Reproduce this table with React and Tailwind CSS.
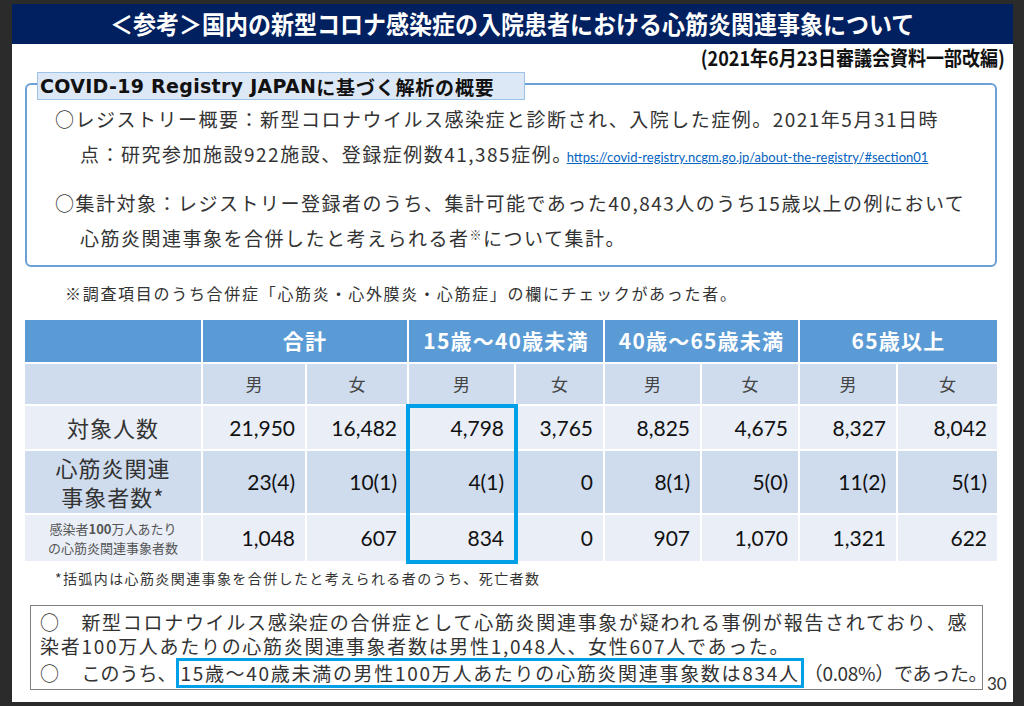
import React from 'react'

const rows = [
  {
    label: <span className='text-[22px] tracking-[1px]'>対象人数</span>,
    vals: ['21,950', '16,482', '4,798', '3,765', '8,825', '4,675', '8,327', '8,042'],
    h: 'h-[43px]',
    bg: 'bg-[#e9eef7]',
  },
  {
    label: (
      <span className='text-[22px] tracking-[1px] leading-[29px] text-center'>
        心筋炎関連<br />事象者数*
      </span>
    ),
    vals: ['23(4)', '10(1)', '4(1)', '0', '8(1)', '5(0)', '11(2)', '5(1)'],
    h: 'h-[62px]',
    bg: 'bg-[#cfdcee]',
  },
  {
    label: (
      <span className='text-[13px] leading-[19px] text-center text-[#555]'>
        感染者<b>100</b>万人あたり<br />の心筋炎関連事象者数
      </span>
    ),
    vals: ['1,048', '607', '834', '0', '907', '1,070', '1,321', '622'],
    h: 'h-[46px]',
    bg: 'bg-[#e9eef7]',
  },
]

const groups = ['合計', '15歳～40歳未満', '40歳～65歳未満', '65歳以上']

function App() {
  return (
    <div className="w-[1024px] h-[706px] bg-[#2b2b2b] pt-[4px] pl-[12px] pr-[11px] font-['Noto_Sans_CJK_JP',sans-serif] text-[#333]">
      <div className='bg-white h-[698px] flex flex-col'>

        {/* title */}
        <div className='h-[40px] bg-[#002060] flex items-center justify-center overflow-hidden'>
          <span className='inline-block text-white text-[25px] font-bold scale-x-[0.92] whitespace-nowrap'>
            ＜参考＞国内の新型コロナ感染症の入院患者における心筋炎関連事象について
          </span>
        </div>

        <div className='h-[28px] flex items-center justify-end pr-[8px]'>
          <span className='inline-block origin-right text-[20px] font-bold text-[#111] scale-x-[0.9] whitespace-nowrap'>
            (2021年6月23日審議会資料一部改編)
          </span>
        </div>

        {/* summary box */}
        <div className='relative ml-[13px] mt-[11px] w-[972px] h-[184px] border-2 border-[#6aa0d6] rounded-[6px] pt-[16px] pl-[28px] text-[19px] tracking-[1.5px] leading-[35px]'>
          <div className="absolute left-[10px] top-[-13px] h-[28px] w-[488px] bg-[#dce8f5] border border-[#9dc3e6] flex items-center pl-[2px] font-bold text-[#111] whitespace-nowrap">
            <span className="font-['DejaVu_Sans',sans-serif] text-[19px] tracking-[0.3px]">COVID-19 Registry JAPAN</span>
            <span className='text-[19px] tracking-[0.8px]'>に基づく解析の概要</span>
          </div>
          <div className='whitespace-nowrap'>
            <div>○レジストリー概要：新型コロナウイルス感染症と診断され、入院した症例。2021年5月31日時</div>
            <div className='pl-[25px]'>
              点：研究参加施設922施設、登録症例数41,385症例。
              <a href='#' className="ml-[-6px] font-['Lato',sans-serif] text-[13px] tracking-normal text-[#0563c1] underline">
                https://covid-registry.ncgm.go.jp/about-the-registry/#section01
              </a>
            </div>
          </div>
          <div className='mt-[10px] whitespace-nowrap'>
            <div>○集計対象：レジストリー登録者のうち、集計可能であった40,843人のうち15歳以上の例において</div>
            <div className='pl-[25px]'>心筋炎関連事象を合併したと考えられる者<sup className='text-[12px]'>※</sup>について集計。</div>
          </div>
        </div>

        <div className='mt-[14px] pl-[53px] h-[24px] leading-[24px] text-[16px] tracking-[1.7px] whitespace-nowrap'>
          ※調査項目のうち合併症「心筋炎・心外膜炎・心筋症」の欄にチェックがあった者。
        </div>

        {/* table */}
        <div className='relative ml-[13px] mt-[15px] w-[972px]'>
          <div className='grid grid-cols-[176px_102px_100px_105px_87px_95px_96px_96px_99px] gap-[2px]'>
            <div className='h-[42px] bg-[#5b9bd5]'></div>
            {groups.map((g) => (
              <div key={g} className='col-span-2 h-[42px] bg-[#5b9bd5] flex items-center justify-center text-white font-bold text-[21px] tracking-[1.2px]'>
                {g}
              </div>
            ))}

            <div className='h-[40px] bg-[#cfdcee]'></div>
            {['男', '女', '男', '女', '男', '女', '男', '女'].map((s, i) => (
              <div key={i} className='h-[40px] bg-[#cfdcee] flex items-center justify-center text-[17px] text-[#444]'>
                {s}
              </div>
            ))}

            {rows.map((r, ri) => (
              <React.Fragment key={ri}>
                <div className={`${r.h} ${r.bg} flex items-center justify-center text-[#333]`}>{r.label}</div>
                {r.vals.map((v, i) => (
                  <div key={i} className={`${r.h} ${r.bg} flex items-center justify-end pr-[10px] font-['Lato',sans-serif] text-[21px] text-[#111]`}>
                    {v}
                  </div>
                ))}
              </React.Fragment>
            ))}
          </div>
          {/* highlighted column */}
          <div className='absolute left-[381px] top-[84px] w-[112px] h-[160px] border-[4px] border-[#00a0e9]'></div>
        </div>

        <div className='mt-[7px] pl-[43px] h-[20px] leading-[20px] text-[14px] tracking-[1.4px] whitespace-nowrap'>
          *括弧内は心筋炎関連事象を合併したと考えられる者のうち、死亡者数
        </div>

        {/* conclusion */}
        <div className='mt-[17px] flex items-end'>
          <div className='ml-[18px] w-[953px] h-[85px] border border-[#808080] pt-[4px] pl-[9px] text-[19px] tracking-[1.7px] leading-[24px] whitespace-nowrap'>
            <div>○　新型コロナウイルス感染症の合併症として心筋炎関連事象が疑われる事例が報告されており、感</div>
            <div>染者100万人あたりの心筋炎関連事象者数は男性1,048人、女性607人であった。</div>
            <div className='flex items-center'>
              <span>○　<span className='tracking-[0px]'>このうち、</span></span>
              <span className='border-[3px] border-[#00a0e9] px-[1px]'>15歳～40歳未満の男性100万人あたりの心筋炎関連事象数は834人</span>
              <span className='tracking-[-0.3px]'>（0.08%）であった。</span>
            </div>
          </div>
          <div className="ml-[4px] mb-[-2px] font-['Lato',sans-serif] text-[17px] text-[#333] leading-none">30</div>
        </div>

      </div>
    </div>
  )
}

export default App
